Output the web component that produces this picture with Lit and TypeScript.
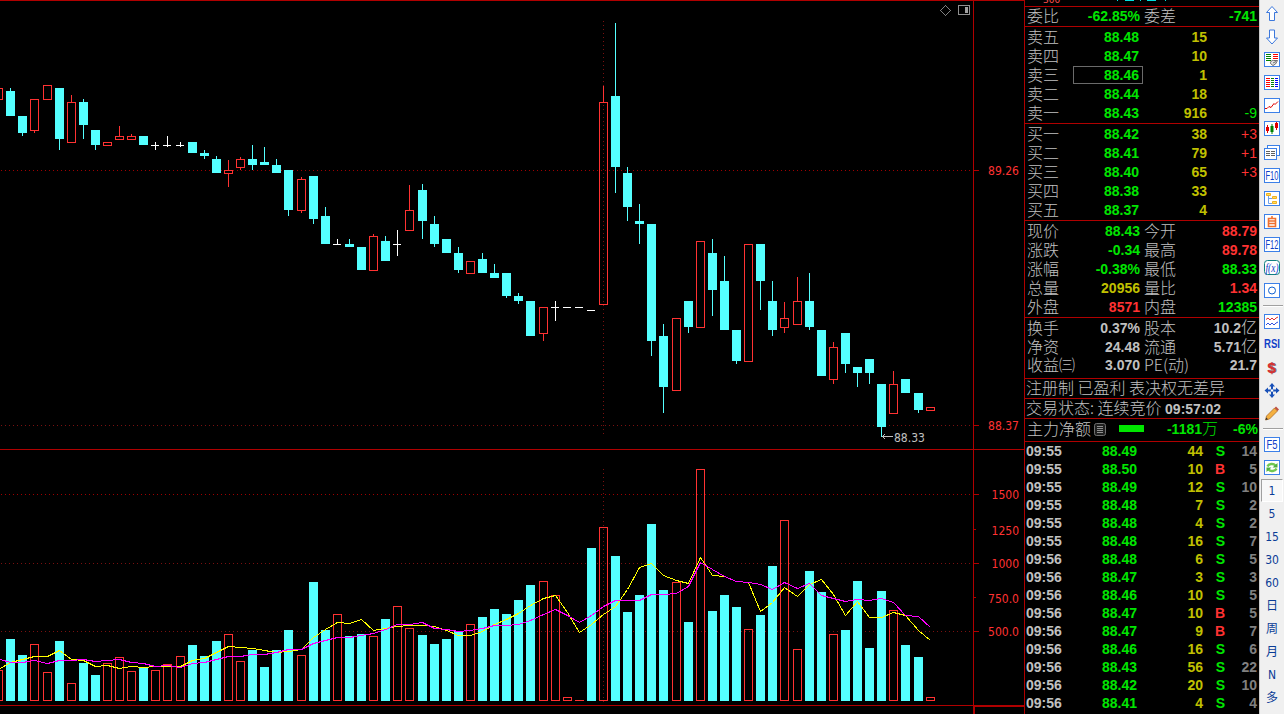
import { html, svg, css, LitElement } from 'lit';
import { customElement } from 'lit/decorators.js';
import { classMap } from 'lit/directives/class-map.js';

// left edge, kind (u = up, d = down, f = flat), high, body top, body bottom, low, volume top
type Candle = [number, string, number, number, number, number, number];

const CANDLES: Candle[] = [
  [-6, 'u', 88, 88, 100, 100, 670],
  [6, 'd', 88, 91, 116, 116, 639],
  [18, 'd', 116, 116, 133, 136, 655],
  [30, 'u', 99, 99, 131, 133, 644],
  [43, 'u', 85, 85, 100, 100, 672],
  [55, 'd', 88, 88, 139, 150, 641],
  [67, 'u', 95, 102, 143, 143, 683],
  [79, 'd', 99, 102, 125, 139, 663],
  [91, 'd', 130, 130, 145, 150, 675],
  [103, 'u', 142, 142, 146, 146, 663],
  [115, 'u', 126, 136, 140, 140, 657],
  [127, 'u', 134, 136, 140, 140, 671],
  [139, 'd', 136, 136, 145, 145, 667],
  [151, 'f', 142, 145, 146, 150, 670],
  [163, 'f', 136, 145, 146, 147, 664],
  [176, 'f', 142, 145, 146, 147, 656],
  [188, 'd', 142, 142, 153, 153, 645],
  [200, 'd', 150, 153, 156, 159, 656],
  [212, 'd', 156, 159, 173, 173, 641],
  [224, 'u', 160, 170, 174, 187, 634],
  [236, 'u', 157, 159, 168, 170, 661],
  [248, 'd', 145, 159, 165, 170, 650],
  [260, 'd', 147, 162, 165, 165, 667],
  [272, 'd', 159, 165, 173, 173, 650],
  [284, 'd', 170, 170, 210, 216, 630],
  [297, 'u', 177, 179, 211, 213, 655],
  [309, 'd', 176, 176, 219, 224, 582],
  [321, 'd', 207, 216, 244, 244, 630],
  [333, 'f', 239, 244, 245, 245, 614],
  [345, 'd', 239, 244, 247, 247, 636],
  [357, 'd', 247, 247, 270, 270, 634],
  [369, 'u', 234, 236, 271, 271, 636],
  [381, 'd', 236, 241, 261, 261, 619],
  [393, 'f', 230, 244, 245, 256, 606],
  [405, 'u', 185, 210, 231, 231, 628],
  [418, 'd', 184, 190, 221, 239, 635],
  [430, 'd', 216, 224, 244, 247, 644],
  [442, 'd', 239, 239, 253, 253, 639],
  [454, 'd', 247, 253, 270, 273, 631],
  [466, 'u', 261, 261, 274, 274, 624],
  [478, 'd', 253, 259, 273, 273, 617],
  [490, 'd', 264, 273, 278, 278, 609],
  [502, 'd', 273, 273, 296, 298, 614],
  [514, 'd', 293, 296, 301, 304, 600],
  [526, 'd', 301, 301, 336, 336, 585],
  [539, 'u', 307, 307, 334, 341, 581],
  [551, 'f', 301, 307, 308, 321, 595],
  [563, 'f', 307, 307, 308, 308, 697],
  [575, 'f', 307, 307, 308, 308, 700],
  [587, 'f', 310, 310, 311, 311, 548],
  [599, 'u', 86, 102, 305, 305, 527],
  [611, 'd', 23, 96, 167, 193, 556],
  [623, 'd', 167, 173, 207, 221, 612],
  [635, 'd', 204, 221, 224, 244, 595],
  [647, 'd', 224, 224, 341, 356, 524],
  [659, 'd', 324, 336, 387, 413, 590],
  [672, 'u', 318, 318, 391, 391, 582],
  [684, 'd', 301, 301, 327, 333, 622],
  [696, 'u', 241, 241, 328, 328, 469],
  [708, 'd', 239, 253, 290, 316, 611],
  [720, 'd', 256, 281, 330, 330, 595],
  [732, 'd', 330, 330, 361, 364, 607],
  [744, 'u', 244, 244, 362, 362, 629],
  [756, 'd', 244, 244, 281, 310, 615],
  [768, 'd', 281, 301, 330, 336, 566],
  [780, 'u', 302, 318, 328, 333, 520],
  [793, 'u', 277, 301, 325, 325, 649],
  [805, 'd', 273, 301, 327, 330, 571],
  [817, 'd', 330, 330, 376, 376, 592],
  [829, 'u', 342, 347, 380, 384, 634],
  [841, 'd', 333, 333, 364, 373, 630],
  [853, 'd', 367, 367, 373, 387, 581],
  [865, 'd', 359, 359, 373, 384, 648],
  [877, 'd', 384, 384, 427, 437, 591],
  [889, 'u', 371, 384, 414, 414, 610],
  [901, 'd', 379, 379, 393, 393, 645],
  [914, 'd', 393, 393, 410, 413, 657],
  [926, 'u', 407, 407, 411, 411, 697],
];

const MA5 = [
  668, 662, 659, 656, 656, 650, 659, 660, 666, 665, 668, 666, 667, 666, 666, 666, 660, 658, 652, 646,
  647, 648, 650, 652, 651, 649, 637, 629, 622, 623, 619, 630, 628, 626, 625, 625, 626, 630, 635, 635,
  631, 624, 619, 613, 605, 598, 595, 612, 632, 624, 614, 606, 589, 567, 563, 575, 580, 583, 557, 575,
  576, 581, 582, 611, 602, 587, 596, 584, 579, 594, 615, 601, 617, 617, 612, 615, 630, 640,
];
const MA10 = [
  659, 662, 662, 660, 663, 660, 660, 659, 661, 660, 659, 662, 663, 666, 665, 667, 663, 662, 659, 656,
  656, 654, 654, 652, 649, 649, 643, 640, 637, 637, 635, 633, 629, 624, 624, 622, 628, 629, 631, 630,
  628, 625, 625, 624, 620, 614, 609, 615, 622, 615, 606, 600, 600, 600, 594, 594, 593, 586, 562, 569,
  576, 581, 582, 584, 589, 582, 588, 583, 595, 598, 601, 599, 600, 598, 602, 615, 616, 627,
];

const VOL_BASE = 701;
const CYAN = '#54ffff';
const RED = '#ff3232';
const LINE = '#b00000';

const maPath = (values: number[]) =>
  values
    .map((y, i) => {
      // the first bar is cut off by the window edge
      const x = i === 0 ? 0 : CANDLES[i][0] + 4;
      return `${x + 0.5},${y + 0.5}`;
    })
    .join(' ');

@customElement('kline-chart')
export class KlineChart extends LitElement {
  static styles = css`
    :host {
      display: block;
      width: 1024px;
      height: 714px;
    }
    svg {
      display: block;
    }
    .shapes {
      shape-rendering: crispEdges;
    }
    .label {
      font-family: 'DejaVu Sans Condensed', 'DejaVu Sans', sans-serif;
      font-stretch: condensed;
      font-size: 12px;
    }
  `;

  _body(x: number, kind: string, top: number, bottom: number) {
    return kind === 'u'
      ? svg`<rect x=${x + 0.5} y=${top + 0.5} width="8" height=${Math.max(bottom - top - 1, 0.01)} fill="none" stroke=${RED}></rect>`
      : svg`<rect x=${x} y=${top} width="9" height=${bottom - top} fill=${CYAN}></rect>`;
  }

  _candle([x, kind, high, top, bottom, low]: Candle) {
    if (kind === 'f') {
      return svg`
        <rect x=${x} y=${top} width="8" height="1" fill="#fff"></rect>
        <rect x=${x + 4} y=${high} width="1" height=${low - high} fill="#fff"></rect>`;
    }
    const color = kind === 'u' ? RED : CYAN;
    return svg`
      ${high < top ? svg`<rect x=${x + 4} y=${high} width="1" height=${top - high} fill=${color}></rect>` : ''}
      ${low > bottom ? svg`<rect x=${x + 4} y=${bottom} width="1" height=${low - bottom} fill=${color}></rect>` : ''}
      ${this._body(x, kind, top, bottom)}`;
  }

  _volume([x, kind, , , , , top]: Candle) {
    const shown = kind === 'f' ? (x === 587 ? 'd' : 'u') : kind;
    return this._body(x, shown, top, VOL_BASE);
  }

  render() {
    const grid = [170, 425, 494, 563, 631];
    const ticks = [[170, 5], [425, 5], [494, 5], [529, 2], [563, 5], [597, 2], [631, 5]];
    const labels: [string, number][] = [
      ['89.26', 175], ['88.37', 430], ['1500', 499], ['1250', 535], ['1000', 568], ['750.0', 603], ['500.0', 636],
    ];
    return html`
      <svg width="1024" height="714" viewBox="0 0 1024 714">
        <rect width="1024" height="714" fill="#000"></rect>
        <g class="shapes">
          ${grid.map(y => svg`<path d="M1 ${y + 0.5}H973" stroke=${y === 170 || y === 494 ? '#a00000' : '#7a1010'} stroke-dasharray="1 3"></path>`)}
          <path d="M603.5 21V435M603.5 469V702" stroke="#7a1010" stroke-dasharray="1 3"></path>
          ${CANDLES.map(c => this._candle(c))}
          ${CANDLES.map(c => this._volume(c))}
          <polyline points=${maPath(MA5)} fill="none" stroke="#ffff00"></polyline>
          <polyline points=${maPath(MA10)} fill="none" stroke="#ff00ff"></polyline>
          <path d="M0 .5H1024M973.5 1V706M0 449.5H1024M0 705.5H973" stroke=${LINE}></path>
          <path d="M974 714V706H1024" fill="none" stroke=${LINE} stroke-width="2"></path>
          ${ticks.map(([y, w]) => svg`<path d="M974 ${y + 0.5}h${w}" stroke=${LINE}></path>`)}
          <path d="M882 436.5h11M882 436.5h3M884.5 434v1M883.5 435v1M883.5 437v1M884.5 438v1" stroke="#c0c0c0"></path>
          <path d="M945.5 5.5l5 5-5 5-5-5z" fill="none" stroke="#808080"></path>
          <rect x="958.5" y="5.5" width="11" height="9" rx="1" fill="none" stroke="#909090"></rect>
          <rect x="965" y="7" width="3" height="6" fill="#a0a0a0"></rect>
        </g>
        <text class="label" x="894" y="442" fill="#c0c0c0">88.33</text>
        ${labels.map(([t, y]) => svg`<text class="label" x="1019" y=${y} text-anchor="end" fill=${RED}>${t}</text>`)}
      </svg>
    `;
  }
}

const ASKS = [
  ['卖五', '88.48', '15', ''],
  ['卖四', '88.47', '10', ''],
  ['卖三', '88.46', '1', ''],
  ['卖二', '88.44', '18', ''],
  ['卖一', '88.43', '916', '-9'],
];
const BIDS = [
  ['买一', '88.42', '38', '+3'],
  ['买二', '88.41', '79', '+1'],
  ['买三', '88.40', '65', '+3'],
  ['买四', '88.38', '33', ''],
  ['买五', '88.37', '4', ''],
];
// label, value, colour, label, value, colour
const STATS = [
  ['现价', '88.43', 'g', '今开', '88.79', 'r'],
  ['涨跌', '-0.34', 'g', '最高', '89.78', 'r'],
  ['涨幅', '-0.38%', 'g', '最低', '88.33', 'g'],
  ['总量', '20956', 'y', '量比', '1.34', 'r'],
  ['外盘', '8571', 'r', '内盘', '12385', 'g'],
];
const SHARES = [
  ['换手', '0.37%', 'w', '股本', '10.2亿', 'w'],
  ['净资', '24.48', 'w', '流通', '5.71亿', 'w'],
  ['收益㈢', '3.070', 'w', 'PE(动)', '21.7', 'w'],
];
const TICKS = [
  ['09:55', '88.49', '44', 'S', '14'],
  ['09:55', '88.50', '10', 'B', '5'],
  ['09:55', '88.49', '12', 'S', '10'],
  ['09:55', '88.48', '7', 'S', '2'],
  ['09:55', '88.48', '4', 'S', '2'],
  ['09:55', '88.48', '16', 'S', '7'],
  ['09:56', '88.48', '6', 'S', '5'],
  ['09:56', '88.47', '3', 'S', '3'],
  ['09:56', '88.46', '10', 'S', '5'],
  ['09:56', '88.47', '10', 'B', '5'],
  ['09:56', '88.47', '9', 'B', '7'],
  ['09:56', '88.46', '16', 'S', '6'],
  ['09:56', '88.43', '56', 'S', '22'],
  ['09:56', '88.42', '20', 'S', '10'],
  ['09:56', '88.41', '4', 'S', '4'],
];

@customElement('quote-panel')
export class QuotePanel extends LitElement {
  static styles = css`
    :host {
      display: block;
      box-sizing: border-box;
      width: 235px;
      height: 714px;
      overflow: hidden;
      background: #000;
      border-left: 1px solid #b00000;
      color: #c0c0c0;
      font: bold 14px/19px 'Liberation Sans', 'Noto Sans CJK SC', sans-serif;
      white-space: nowrap;
    }
    .section {
      box-sizing: border-box;
      border-bottom: 1px solid #b00000;
    }
    .top {
      display: flex;
      height: 7px;
      overflow: hidden;
    }
    .code {
      margin: -6px 0 0 18px;
      width: 73px;
      color: #ff5050;
      font: 9px/12px 'DejaVu Sans', sans-serif;
    }
    .book {
      height: 97px;
      padding-top: 1px;
    }
    .shares {
      height: 61px;
    }
    .head {
      height: 20px;
    }
    .row {
      display: grid;
      height: 19px;
      align-items: center;
    }
    .quote {
      grid-template-columns: 48px 67px 65px 50px;
      padding-left: 2px;
    }
    .stat {
      grid-template-columns: 46px 63px 46px 63px;
      column-gap: 4px;
      padding-left: 2px;
    }
    .num {
      text-align: right;
    }
    .quote .price {
      box-sizing: border-box;
      width: 70px;
      height: 18px;
      line-height: 16px;
      margin: -1px 0 0 -2px;
      padding-right: 3px;
      border: 1px solid transparent;
    }
    .quote .marked {
      border-color: #6a6a6a;
    }
    .delta {
      font-weight: 400;
    }
    .name,
    .note,
    .cn {
      font-family: 'Noto Sans CJK SC', sans-serif;
      font-weight: 300;
      font-size: 16px;
    }
    .name {
      line-height: 17px;
      padding-bottom: 2px;
    }
    .cn {
      line-height: 1;
    }
    .note {
      height: 20px;
      line-height: 17px;
      padding-left: 1px;
    }
    .note b {
      font: bold 14px/1 'Liberation Sans', sans-serif;
    }
    .flow {
      display: flex;
      align-items: center;
      height: 23px;
      padding: 0 0 2px 2px;
    }
    .flow svg {
      margin-left: 3px;
    }
    .bar {
      width: 25px;
      height: 7px;
      margin: 0 0 1px 13px;
      background: #00e600;
    }
    .flow .net {
      width: 74px;
    }
    .flow .pct {
      width: 40px;
    }
    .tick {
      grid-template-columns: 47px 64px 66px 22px 32px;
      height: 18px;
      line-height: 18px;
      padding-left: 1px;
    }
    .side {
      text-align: right;
    }
    .g {
      color: #00e600;
    }
    .r {
      color: #ff3232;
    }
    .y {
      color: #c0c000;
    }
    .dim {
      color: #808080;
    }
  `;

  _value(v: string) {
    return v.endsWith('亿') ? html`${v.slice(0, -1)}<span class="cn">亿</span>` : v;
  }

  _quote([name, price, qty, delta]: string[]) {
    return html`
      <div class="row quote">
        <span class="name">${name}</span>
        <span class=${classMap({ num: true, price: true, g: true, marked: price === '88.46' })}>${price}</span>
        <span class="num y">${qty}</span>
        <span class="num delta ${delta[0] === '-' ? 'g' : 'r'}">${delta}</span>
      </div>`;
  }

  _stat([name, a, ca, name2, b, cb]: string[]) {
    return html`
      <div class="row stat">
        <span class="name">${name}</span><span class="num ${ca}">${a}</span>
        <span class="name">${name2}</span><span class="num ${cb}">${this._value(b)}</span>
      </div>`;
  }

  render() {
    return html`
      <div class="section top">
        <span class="code">300</span>
        <svg width="60" height="4" fill="#00e0e0">
          <path d="M1 0h1v1h-1zM9 0h9v1h-9zM24 0h1v1h-1zM31 0h9v1h-9zM49 0h1v1h-1z"></path>
        </svg>
      </div>
      <div class="section head">${this._stat(['委比', '-62.85%', 'g', '委差', '-741', 'g'])}</div>
      <div class="section book">${ASKS.map(r => this._quote(r))}</div>
      <div class="section book">${BIDS.map(r => this._quote(r))}</div>
      <div class="section book">${STATS.map(r => this._stat(r))}</div>
      <div class="section shares">${SHARES.map(r => this._stat(r))}</div>
      <div class="section note">注册制 已盈利 表决权无差异</div>
      <div class="section note">交易状态: 连续竞价 <b>09:57:02</b></div>
      <div class="section flow">
        <span class="name">主力净额</span>
        <svg width="12" height="13">
          <rect x=".5" y=".5" width="11" height="12" rx="2" fill="#202020" stroke="#707070"></rect>
          <path d="M3 3.5h6M3 5.5h6M3 7.5h6M3 9.5h6" stroke="#909090"></path>
        </svg>
        <span class="bar"></span>
        <span class="num net g">-1181<span class="cn">万</span></span>
        <span class="num pct g">-6%</span>
      </div>
      ${TICKS.map(([time, price, qty, side, count]) => html`
        <div class="row tick">
          <span>${time}</span>
          <span class="num g">${price}</span>
          <span class="num y">${qty}</span>
          <span class="side ${side === 'S' ? 'g' : 'r'}">${side}</span>
          <span class="num dim">${count}</span>
        </div>`)}
    `;
  }
}

const frame = svg`<rect x=".5" y=".5" width="15" height="14" fill="#fff" stroke="#3c80e8"></rect>`;

const ICONS = [
  svg`<path d="M8 .5L13.5 6.5H10.5V14.5H5.5V6.5H2.5z" fill="#fff" stroke="#3c78dc"></path>`,
  svg`<path d="M8 15L13.5 9H10.5V1H5.5V9H2.5z" fill="#fff" stroke="#3c78dc"></path>`,
  svg`${frame}<path d="M2 2.500h5M2 4.500h5M2 6.500h5M2 8.500h5" stroke="#008000"></path><path d="M9 2.500h5M9 4.500h5M9 6.500h5" stroke="#f00"></path><path d="M6.500 11.500a2.500 2.500 0 0 1 3-3h4l-2 3.500-2.500 1.500zM9 11l3-1.500" fill="#e4e4e4" stroke="#707070"></path>`,
  svg`${frame}<path d="M2 3.5h4M2 5.5h4M2 7.5h4M2 9.5h4M2 11.5h4" stroke="#f00"></path><path d="M7 3.5h3M7 5.5h3M7 7.5h3M7 9.5h3M7 11.5h3" stroke="#008000"></path><path d="M11 3.5h3M11 5.5h3M11 7.5h3M11 9.5h3M11 11.5h3" stroke="#00f"></path>`,
  svg`${frame}<path d="M1 10.5h2l2-2 2 1 3-4 1 1 3-3" fill="none" stroke="#e00000"></path>`,
  svg`${frame}<path d="M3.500 4v8M12.500 1v8" stroke="#e00000"></path><path d="M8 3v10" stroke="#008000"></path><path d="M2 6h3v4h-3zM11 2h3v5h-3z" fill="#e00000"></path><path d="M6.500 5h3v6h-3z" fill="#008000"></path>`,
  svg`<rect x="3.500" y=".5" width="12" height="10" fill="#fff" stroke="#3c80e8"></rect><rect x=".5" y="3.500" width="12" height="11" fill="#fff" stroke="#3c80e8"></rect><path d="M2 6.500h4M7 6.500h4M2 8.500h4M7 8.500h4M2 10.500h4M7 10.500h4" stroke="#606060"></path>`,
  svg`${frame}<text x="8" y="12" text-anchor="middle" textLength="13" lengthAdjust="spacingAndGlyphs" class="glyph">F10</text>`,
  svg`${frame}<path d="M4.500 5v7.500h4M4.500 7.500h4" fill="none" stroke="#70a0e8"></path><path d="M2.500 2.500h4v2h-4zM8.500 5.500h4v2h-4zM8.500 10.500h4v2h-4z" fill="#ffe060" stroke="#f0b020"></path>`,
  svg`${frame}<path d="M4.500 4.500h7v8h-7zM5 7h6M5 9.500h6M8 2v2" fill="none" stroke="#f07030" stroke-width="1.600"></path>`,
  svg`${frame}<text x="8" y="12" text-anchor="middle" textLength="13" lengthAdjust="spacingAndGlyphs" class="glyph">F12</text>`,
  svg`<rect x=".5" y=".5" width="15" height="14" rx="3" fill="#fff" stroke="#108080"></rect><text x="8" y="11.500" text-anchor="middle" textLength="13" lengthAdjust="spacingAndGlyphs" class="glyph fx">f(x)</text>`,
  svg`${frame}<circle cx="8" cy="7.500" r="3.500" fill="none" stroke="#1060d0"></circle>`,
  null,
  svg`${frame}<path d="M2 5.500l2-1.500 2 2 2-2 2 2 2-2 2-1" fill="none" stroke="#e03030"></path><path d="M2 11l2-2 2 2 2-2 2 2 2-2 2-1" fill="none" stroke="#3050e0"></path>`,
  svg`<text x="8" y="11" text-anchor="middle" textLength="16" lengthAdjust="spacingAndGlyphs" class="glyph rsi">RSI</text>`,
  svg`<text x="8.500" y="13" text-anchor="middle" class="dollar shade">$</text><text x="7.500" y="12.500" text-anchor="middle" class="dollar">$</text>`,
  svg`<path d="M8 0l3 3.500H9V6.500h3v-2L15.500 7.500 12 10.500v-2H9v3h2L8 15 5 11.500h2v-3H4v2L.5 7.500 4 4.500v2h3v-3H5z" fill="#1850b8"></path><circle cx="8" cy="7.500" r="1.200" fill="#fff"></circle>`,
  svg`<path d="M1.500 14l1-4L10.500 2l3 3-8 8z" fill="#f4b040" stroke="#a06020" stroke-width=".7"></path><path d="M10.500 2l1.500-1.500 3 3L13.500 5z" fill="#c05040"></path><path d="M1.500 14l.8-2.500 1.700 1.700z" fill="#303030"></path>`,
  null,
  svg`${frame}<text x="8" y="12" text-anchor="middle" textLength="11" lengthAdjust="spacingAndGlyphs" class="glyph">F5</text>`,
  svg`${frame}<path d="M3.500 6.500a4.500 3.500 0 0 1 8-1M12.500 8.500a4.500 3.500 0 0 1-8 1" fill="none" stroke="#70c850" stroke-width="2.400"></path><path d="M13.500 3v4.500H8.500zM2.500 12V7.500h5z" fill="#50b040"></path>`,
];

@customElement('tool-strip')
export class ToolStrip extends LitElement {
  static styles = css`
    :host {
      display: flex;
      flex-direction: column;
      box-sizing: border-box;
      width: 25px;
      height: 714px;
      padding-top: 2px;
      background: #f0f0f0;
      border-left: 1px solid #c8c8c8;
      overflow: hidden;
    }
    svg {
      overflow: visible;
    }
    .cell {
      display: flex;
      flex: none;
      box-sizing: border-box;
      height: 23px;
      align-items: center;
      justify-content: center;
      color: #0a3c96;
      font: 12px/22px 'DejaVu Sans Condensed', 'DejaVu Sans', 'Noto Sans CJK SC', sans-serif;
      font-stretch: condensed;
    }
    .cell:nth-child(6) {
      margin-bottom: 1px;
    }
    .sep {
      flex: none;
      height: 1px;
      margin: 3px 1px 3px 3px;
      background: #a0a0a0;
      border-bottom: 1px solid #fff;
    }
    .pressed {
      margin: 0 1px;
      background: #f8f8f8;
      border: 1px solid #fff;
      border-top-color: #a0a0a0;
      border-left-color: #a0a0a0;
    }
    .glyph {
      fill: #1040c8;
      font: 12px 'Liberation Sans', sans-serif;
    }
    .fx {
      font: italic 12px 'Liberation Serif', serif;
    }
    .rsi {
      font-weight: bold;
    }
    .dollar {
      fill: #d83030;
      font: bold 15px 'Liberation Sans', sans-serif;
    }
    .shade {
      fill: #606060;
    }
  `;

  render() {
    const periods = ['1', '5', '15', '30', '60', '日', '周', '月', 'N', '多'];
    return html`
      ${ICONS.map(icon => icon
        ? html`<div class="cell"><svg width="16" height="15" viewBox="0 0 16 15">${icon}</svg></div>`
        : html`<div class="sep"></div>`)}
      ${periods.map(p => html`<div class=${classMap({ cell: true, pressed: p === '1' })}>${p}</div>`)}
    `;
  }
}

@customElement('app-root')
export class AppRoot extends LitElement {
  static styles = css`
    :host {
      display: flex;
      width: 1284px;
      height: 714px;
      overflow: hidden;
      background: #000;
    }
  `;

  render() {
    return html`
      <kline-chart></kline-chart>
      <quote-panel></quote-panel>
      <tool-strip></tool-strip>
    `;
  }
}
